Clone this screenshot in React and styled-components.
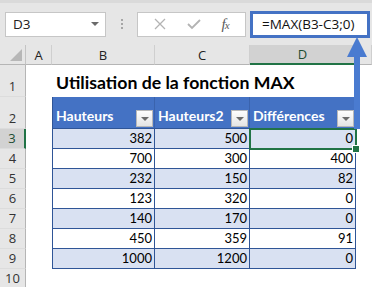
import React from "react";
import styled, { createGlobalStyle, css } from "styled-components";

const GlobalStyle = createGlobalStyle`
  html, body {
    margin: 0;
    padding: 0;
    background: #ffffff;
    overflow: hidden;
  }
  * {
    box-sizing: border-box;
  }
`;

const blue = "#4472c4";
const line = "#2f5597";
const band = "#d9e1f2";
const green = "#217346";

const Page = styled.div`
  position: relative;
  width: 372px;
  height: 287px;
  overflow: hidden;
  background: #ffffff;
`;

const Toolbar = styled.div`
  display: flex;
  align-items: center;
  height: 45px;
  padding-left: 5px;
  background: #e6e6e6;
  border-top: 3px solid #dadada;
`;

const NameBox = styled.div`
  display: flex;
  align-items: center;
  justify-content: space-between;
  width: 101px;
  height: 25px;
  padding: 0 6px 0 7px;
  background: #ffffff;
  border: 1px solid #c6c6c6;
  font-family: "Open Sans", sans-serif;
  font-size: 13.5px;
  color: #222;
`;

const Caret = styled.span`
  width: 0;
  height: 0;
  border-left: 4px solid transparent;
  border-right: 4px solid transparent;
  border-top: 4px solid #6a6a6a;
`;

const Dots = styled.div`
  display: flex;
  flex-direction: column;
  align-items: center;
  gap: 2px;
  width: 31px;
  span {
    width: 2px;
    height: 2px;
    background: #a6a6a6;
  }
`;

const FormulaButtons = styled.div`
  display: flex;
  align-items: center;
  justify-content: space-around;
  width: 109px;
  height: 25px;
  margin-right: 4px;
  padding: 0 6px;
  background: #ffffff;
  border: 1px solid #c6c6c6;
`;

const Fx = styled.span`
  font-family: "Liberation Serif", serif;
  font-style: italic;
  font-size: 15px;
  color: #5a5a5a;
  letter-spacing: -1px;
  small {
    font-size: 11px;
  }
`;

const FormulaBox = styled.div`
  display: flex;
  align-items: center;
  width: 120px;
  height: 27px;
  padding-left: 9px;
  background: #ffffff;
  border: 3px solid ${blue};
  font-family: "Open Sans", sans-serif;
  font-size: 13.5px;
  color: #111;
  white-space: nowrap;
`;

const Row = styled.div`
  display: grid;
  grid-template-columns: 26px 26px 103px 95px 106px 1fr;
  height: ${({ $h }) => $h}px;
`;

const Corner = styled.div`
  display: flex;
  align-items: flex-end;
  justify-content: flex-end;
  padding: 0 3px 3px 0;
  background: #e6e6e6;
  border-right: 1px solid #c4c4c4;
  border-bottom: 1px solid #b5b5b5;
`;

const ColHead = styled.div`
  display: flex;
  align-items: center;
  justify-content: center;
  background: ${({ $active }) => ($active ? "#d2d2d2" : "#e6e6e6")};
  border-right: 1px solid #cfcfcf;
  border-bottom: ${({ $active }) =>
    $active ? `2px solid ${green}` : "1px solid #b5b5b5"};
  font-family: "Open Sans", sans-serif;
  font-size: 13px;
  color: ${({ $active }) => ($active ? "#1e4d32" : "#222")};
`;

const RowHead = styled.div`
  display: flex;
  align-items: flex-end;
  justify-content: center;
  padding-bottom: 1px;
  background: ${({ $active }) => ($active ? "#d2d2d2" : "#e6e6e6")};
  border-right: ${({ $active }) =>
    $active ? `2px solid ${green}` : "1px solid #b5b5b5"};
  border-bottom: 1px solid #dcdcdc;
  font-family: "Open Sans", sans-serif;
  font-size: 13px;
  color: ${({ $active }) => ($active ? "#1e4d32" : "#333")};
`;

const Blank = styled.div`
  background: #ffffff;
`;

const Title = styled.div`
  grid-column: 3 / 6;
  display: flex;
  align-items: flex-end;
  padding: 0 0 4px 4px;
  font-family: Lato, sans-serif;
  font-weight: 700;
  font-size: 17.7px;
  color: #000;
  white-space: nowrap;
`;

const TableCell = styled.div`
  display: flex;
  align-items: flex-end;
  border-right: 1px solid ${line};
  border-bottom: 1px solid ${line};
  font-family: Lato, sans-serif;
  font-size: 13px;
  color: #000;
  ${({ $first }) =>
    $first &&
    css`
      border-left: 1px solid ${line};
    `}
  ${({ $head }) =>
    $head
      ? css`
          justify-content: space-between;
          padding: 0 1px 1px 3px;
          background: ${blue};
          color: #ffffff;
          font-weight: 700;
          font-size: 14px;
          border-right-color: #3a63ad;
          span {
            padding-bottom: 3px;
          }
        `
      : css`
          justify-content: flex-end;
          padding: 0 2px 2px 0;
          background: ${({ $band }) => ($band ? band : "#ffffff")};
        `}
`;

const FilterButton = styled.div`
  display: flex;
  align-items: center;
  justify-content: center;
  width: 17px;
  height: 17px;
  background: linear-gradient(#fdfdfd, #e4e4e4);
  border: 1px solid #b8b8b8;
  &::after {
    content: "";
    border-left: 4px solid transparent;
    border-right: 4px solid transparent;
    border-top: 4px solid #6b6b6b;
  }
`;

const Selection = styled.div`
  position: absolute;
  left: 249px;
  top: 128px;
  width: 108px;
  height: 22px;
  border: 2px solid ${green};
  pointer-events: none;
  &::after {
    content: "";
    position: absolute;
    right: -5px;
    bottom: -5px;
    width: 6px;
    height: 6px;
    background: ${green};
    border: 1px solid #ffffff;
  }
`;

const Arrow = styled.svg`
  position: absolute;
  left: 345px;
  top: 36px;
`;

const data = [
  [382, 500, 0],
  [700, 300, 400],
  [232, 150, 82],
  [123, 320, 0],
  [140, 170, 0],
  [450, 359, 91],
  [1000, 1200, 0],
];

const headers = ["Hauteurs", "Hauteurs2", "Différences"];

export default function App() {
  return (
    <Page>
      <GlobalStyle />
      <Toolbar>
        <NameBox>
          D3
          <Caret />
        </NameBox>
        <Dots>
          <span />
          <span />
          <span />
        </Dots>
        <FormulaButtons>
          <svg width="12" height="12" viewBox="0 0 12 12">
            <path d="M1 1 L11 11 M11 1 L1 11" stroke="#b3b3b3" strokeWidth="1.3" />
          </svg>
          <svg width="14" height="12" viewBox="0 0 14 12">
            <path d="M1 6 L5 10 L13 2" stroke="#b3b3b3" strokeWidth="1.8" fill="none" />
          </svg>
          <Fx>
            f<small>x</small>
          </Fx>
        </FormulaButtons>
        <FormulaBox>=MAX(B3-C3;0)</FormulaBox>
      </Toolbar>

      <Row $h={20}>
        <Corner>
          <svg width="12" height="12" viewBox="0 0 12 12">
            <path d="M12 0 L12 12 L0 12 Z" fill="#b7b7b7" />
          </svg>
        </Corner>
        <ColHead>A</ColHead>
        <ColHead>B</ColHead>
        <ColHead>C</ColHead>
        <ColHead $active>D</ColHead>
        <ColHead />
      </Row>

      <Row $h={32}>
        <RowHead>1</RowHead>
        <Blank />
        <Title>Utilisation de la fonction MAX</Title>
      </Row>

      <Row $h={32}>
        <RowHead>2</RowHead>
        <Blank />
        {headers.map((h, i) => (
          <TableCell key={h} $head $first={i === 0}>
            <span>{h}</span>
            <FilterButton />
          </TableCell>
        ))}
      </Row>

      {data.map((r, ri) => (
        <Row $h={20} key={ri}>
          <RowHead $active={ri === 0}>{ri + 3}</RowHead>
          <Blank />
          {r.map((v, ci) => (
            <TableCell key={ci} $first={ci === 0} $band={ri % 2 === 0}>
              {v}
            </TableCell>
          ))}
        </Row>
      ))}

      <Row $h={20}>
        <RowHead>10</RowHead>
        <Blank />
      </Row>

      <Selection />
      <Arrow width="24" height="94" viewBox="0 0 24 94">
        <path d="M12 1 L22 21 L15 21 L15 93 L9 93 L9 21 L2 21 Z" fill="#4a7bd0" />
      </Arrow>
    </Page>
  );
}
